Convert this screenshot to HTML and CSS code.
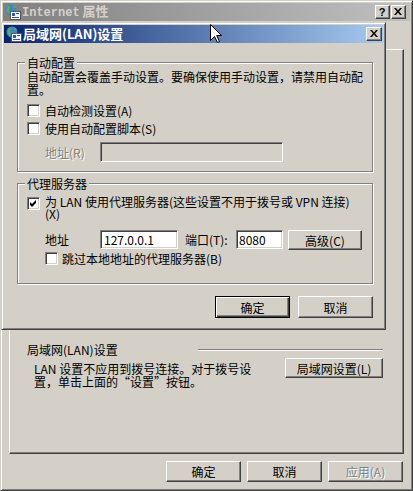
FILE: index.html
```html
<!DOCTYPE html>
<html lang="zh-CN">
<head>
<meta charset="utf-8">
<title>局域网(LAN)设置</title>
<link rel="stylesheet" href="styles.css">
</head>
<body>
<div class="win outer">
  <div class="titlebar inactive">
    <svg class="ticon" viewBox="0 0 16 16" width="16" height="16">
      <circle cx="6" cy="6" r="5.5" fill="#3f86c8"/>
      <path d="M3 1.6c1.6.6 2.2 1.8 1.2 3.2s.4 2.6 1 4.2l-2.2.6C1.6 8.4 1.2 4.6 3 1.6z" fill="#5cb04e"/>
      <path d="M7.5 1c1 .8 2.6.8 3.4 2.4L9 4.6z" fill="#5cb04e"/>
      <rect x="5.5" y="7.5" width="10" height="8" fill="#fff" stroke="#5a5a5a"/>
      <rect x="7" y="9" width="3" height="3" fill="#2a5db0"/>
      <rect x="11" y="9" width="3" height="1" fill="#2a5db0"/>
      <rect x="7" y="13" width="7" height="1" fill="#2a5db0"/>
    </svg>
    <span class="ttext"><span class="mono">Internet</span> 属性</span>
    <div class="tbtns">
      <span class="bevel tbtn qmark">?</span>
      <span class="bevel tbtn"><svg viewBox="0 0 8 7" width="8" height="7"><path d="M0 0h2l2 2.5L6 0h2L5 3.5 8 7H6L4 4.5 2 7H0l3-3.5z" fill="#000"/></svg></span>
    </div>
  </div>
  <div class="tabs"></div>
  <div class="panel">
    <div class="lan-head">
      <span class="lan-label">局域网(LAN)设置</span>
      <span class="etch"></span>
    </div>
    <div class="lan-body">
      <p class="lan-text">LAN 设置不应用到拨号连接。对于拨号设<br>置，单击上面的“设置”按钮。</p>
      <button class="bevel btn lanbtn">局域网设置(L)</button>
    </div>
  </div>
  <div class="outer-btns">
    <button class="bevel btn obtn">确定</button>
    <button class="bevel btn obtn">取消</button>
    <button class="bevel btn obtn disabled">应用(A)</button>
  </div>
</div>

<div class="win dialog">
  <div class="titlebar active">
    <svg class="ticon" viewBox="0 0 16 16" width="16" height="16">
      <circle cx="6" cy="6" r="5.5" fill="#3f86c8"/>
      <path d="M3 1.6c1.6.6 2.2 1.8 1.2 3.2s.4 2.6 1 4.2l-2.2.6C1.6 8.4 1.2 4.6 3 1.6z" fill="#5cb04e"/>
      <path d="M7.5 1c1 .8 2.6.8 3.4 2.4L9 4.6z" fill="#5cb04e"/>
      <rect x="5.5" y="7.5" width="10" height="8" fill="#fff" stroke="#5a5a5a"/>
      <rect x="7" y="9" width="3" height="3" fill="#2a5db0"/>
      <rect x="11" y="9" width="3" height="1" fill="#2a5db0"/>
      <rect x="7" y="13" width="7" height="1" fill="#2a5db0"/>
    </svg>
    <span class="ttext">局域网(LAN)设置</span>
    <div class="tbtns">
      <span class="bevel tbtn close"><svg viewBox="0 0 8 7" width="8" height="7"><path d="M0 0h2l2 2.5L6 0h2L5 3.5 8 7H6L4 4.5 2 7H0l3-3.5z" fill="#000"/></svg></span>
    </div>
  </div>
  <div class="dlg-body">
    <div class="group g1">
      <span class="gtitle">自动配置</span>
      <p class="desc">自动配置会覆盖手动设置。要确保使用手动设置，请禁用自动配<br>置。</p>
      <div class="row r1"><span class="cb"></span><span>自动检测设置(A)</span></div>
      <div class="row r2"><span class="cb"></span><span>使用自动配置脚本(S)</span></div>
      <div class="addr-row">
        <span class="lbl disabled">地址(R)</span>
        <span class="field field-dis"></span>
      </div>
    </div>
    <div class="group g2">
      <span class="gtitle">代理服务器</span>
      <div class="row2">
        <span class="cb"><svg viewBox="0 0 9 9" width="9" height="9"><path d="M1 3 L3 5 L7 1 L7 4 L3 8 L1 6 Z" fill="#000"/></svg></span>
        <span class="proxy-text">为 LAN 使用代理服务器(这些设置不用于拨号或 VPN 连接)<br>(X)</span>
      </div>
      <div class="proxy-row">
        <span class="lbl plbl">地址</span>
        <span class="field f-addr">127.0.0.1</span>
        <span class="lbl port">端口(T):</span>
        <span class="field f-port">8080</span>
        <button class="bevel btn adv">高级(C)</button>
      </div>
      <div class="row r3"><span class="cb"></span><span>跳过本地地址的代理服务器(B)</span></div>
    </div>
    <div class="dlg-btns">
      <button class="btn default">确定</button>
      <button class="bevel btn">取消</button>
    </div>
  </div>
</div>

<svg class="cursor" viewBox="0 0 13 20" width="13" height="20">
  <path d="M0.5 0.5 L0.5 16.5 L4.5 12.5 L7.5 18.5 L9.5 17.5 L6.7 11.5 L11.5 11.5 Z" fill="#fff" stroke="#000" stroke-width="1" stroke-linejoin="miter"/>
</svg>
</body>
</html>
```

FILE: styles.css
```css
* { box-sizing: border-box; }
html, body { margin: 0; padding: 0; }
body {
  width: 413px;
  height: 491px;
  overflow: hidden;
  position: relative;
  background: #d4d0c8;
  color: #000;
  font: 12px/13px "Noto Sans CJK SC", "Noto Sans", sans-serif;
}
p { margin: 0; }

.win {
  background: #d4d0c8;
  border: 1px solid;
  border-color: #d4d0c8 #404040 #404040 #d4d0c8;
  box-shadow: inset 1px 1px #fff, inset -1px -1px #808080;
  padding: 2px;
  display: flex;
  flex-direction: column;
}
.outer { width: 413px; height: 491px; }
.dialog {
  position: absolute;
  left: 1px;
  top: 22px;
  width: 385px;
  height: 308px;
}

.titlebar {
  height: 18px;
  flex: none;
  display: flex;
  align-items: center;
  padding: 0 1px 0 2px;
}
.titlebar.inactive {
  background: linear-gradient(to right, #808080, #c0c0c0);
  color: #d4d0c8;
  padding-right: 4px;
}
.titlebar.active {
  background: linear-gradient(to right, #0a246a, #a6caf0);
  color: #fff;
}
.ticon { flex: none; margin-right: 1px; }
.ttext {
  font-weight: 700;
  font-size: 13px;
  line-height: 18px;
  white-space: nowrap;
}
.mono { font-family: "Liberation Mono", monospace; font-size: 12px; }
.tbtns { margin-left: auto; display: flex; gap: 1px; }

.bevel {
  background: #d4d0c8;
  border: 1px solid;
  border-color: #fff #404040 #404040 #fff;
  box-shadow: inset -1px -1px #808080;
}
.tbtn {
  width: 15px;
  height: 14px;
  display: flex;
  align-items: center;
  justify-content: center;
  padding: 0 1px 1px 0;
}
.tbtn.close { width: 16px; }
.qmark {
  font: 700 11px/12px "Liberation Sans", sans-serif;
  color: #000;
}

.btn {
  font: 12px/13px "Noto Sans CJK SC", "Noto Sans", sans-serif;
  color: #000;
  padding: 0;
  margin: 0;
  display: flex;
  align-items: center;
  justify-content: center;
}
.btn.default {
  background: #d4d0c8;
  border: 1px solid #000;
  box-shadow: inset 1px 1px #fff, inset -1px -1px #404040, inset -2px -2px #808080;
  width: 75px;
  height: 22px;
}
.disabled { color: #808080; text-shadow: 1px 1px 0 #fff; }

/* outer window */
.tabs { height: 28px; flex: none; }
.panel {
  flex: none;
  height: 405px;
  margin: 0 6px;
  border: 1px solid;
  border-color: #fff #404040 #404040 #fff;
  box-shadow: inset -1px -1px #808080;
  padding: 293px 20px 0 17px;
}
.lan-head { display: flex; align-items: center; height: 13px; }
.lan-label { width: 171px; flex: none; white-space: nowrap; }
.etch { flex: 1; height: 2px; border-top: 1px solid #808080; border-bottom: 1px solid #fff; }
.lan-body { display: flex; justify-content: space-between; margin-top: 2px; }
.lan-text { margin: 4px 0 0 7px; line-height: 13px; white-space: nowrap; }
.lanbtn { width: 98px; height: 20px; }
.outer-btns {
  display: flex;
  justify-content: flex-end;
  gap: 6px;
  margin-top: 7px;
  padding-right: 7px;
}
.obtn { width: 75px; height: 21px; }

/* dialog */
.dlg-body { padding: 19px 10px 0 13px; display: flex; flex-direction: column; }
.group {
  border: 1px solid #808080;
  box-shadow: inset 1px 1px #fff, 1px 1px #fff;
  display: flex;
  flex-direction: column;
  align-items: flex-start;
}
.g1 { padding: 0 6px 9px 9px; }
.g2 { margin-top: 11px; padding: 0 6px 18px 9px; }
.gtitle {
  margin: -7px 0 0 -2px;
  padding: 0 2px;
  background: #d4d0c8;
  line-height: 13px;
}
.desc { margin-top: 1px; line-height: 13px; white-space: nowrap; }

.row { display: flex; align-items: center; gap: 5px; height: 13px; white-space: nowrap; }
.r1 { margin-top: 8px; }
.r2 { margin-top: 5px; }
.r3 { margin-top: 2px; margin-left: 18px; gap: 4px; }

.cb {
  width: 13px;
  height: 13px;
  flex: none;
  background: #fff;
  border: 1px solid;
  border-color: #808080 #fff #fff #808080;
  box-shadow: inset 1px 1px #404040, inset -1px -1px #d4d0c8;
  display: flex;
  align-items: center;
  justify-content: center;
}
.field {
  flex: none;
  background: #fff;
  border: 1px solid;
  border-color: #808080 #fff #fff #808080;
  box-shadow: inset 1px 1px #404040, inset -1px -1px #d4d0c8;
  display: flex;
  align-items: center;
  padding: 0 0 0 3px;
  white-space: nowrap;
}
.field-dis { width: 183px; height: 20px; background: #d4d0c8; }
.addr-row { display: flex; align-items: center; margin-top: 7px; }
.lbl { flex: none; white-space: nowrap; }
.addr-row .lbl { margin-left: 18px; width: 55px; }

.row2 { display: flex; align-items: flex-start; gap: 5px; margin-top: 6px; }
.row2 .cb { margin-top: 1px; }
.proxy-text { line-height: 12px; white-space: nowrap; }
.proxy-row { display: flex; align-items: flex-start; margin-top: 10px; }
.plbl { margin-left: 18px; width: 55px; line-height: 19px; }
.f-addr { width: 78px; height: 19px; }
.port { margin-left: 7px; width: 51px; line-height: 19px; }
.f-port { width: 47px; height: 19px; padding-left: 2px; }
.adv { margin-left: 5px; width: 74px; height: 20px; }

.dlg-btns { display: flex; justify-content: flex-end; gap: 8px; margin-top: 12px; }
.dlg-btns .btn { width: 75px; height: 22px; }

.cursor { position: absolute; left: 210px; top: 24px; }
```
